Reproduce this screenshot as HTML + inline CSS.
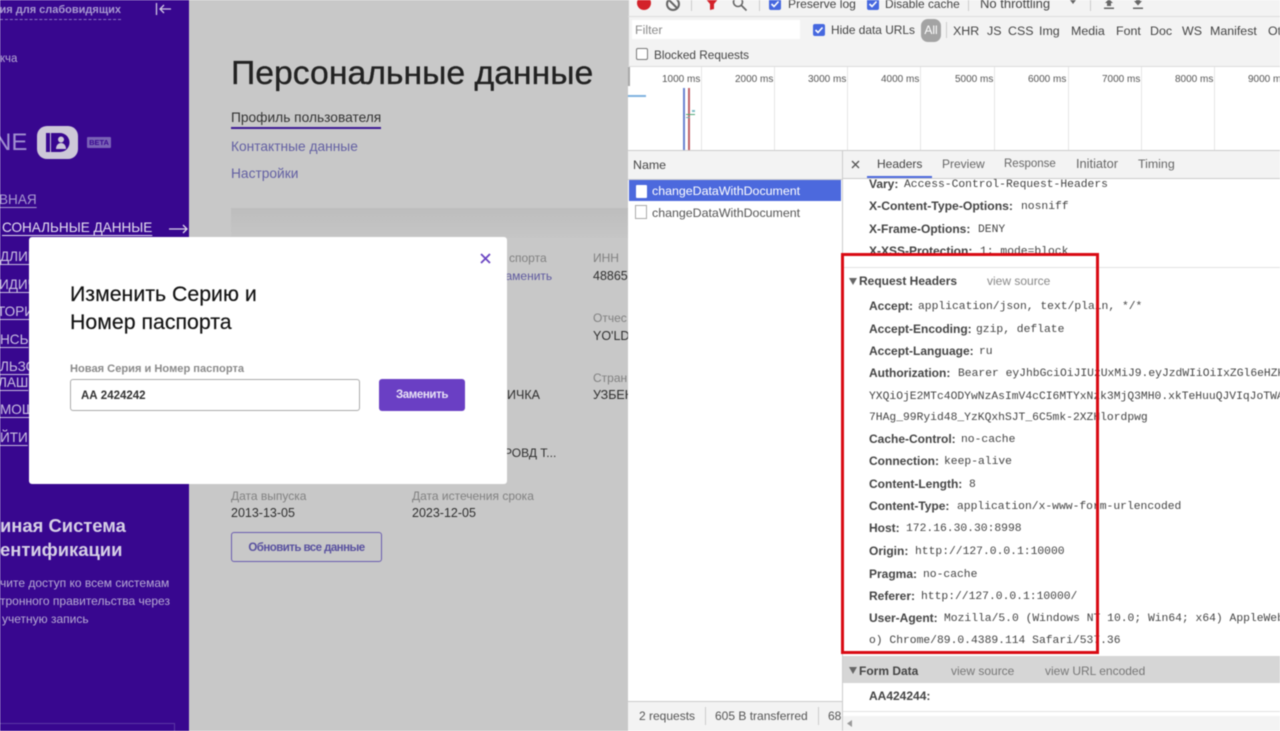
<!DOCTYPE html>
<html lang="ru"><head><meta charset="utf-8"><title>Персональные данные</title>
<style>
html,body{margin:0;padding:0;width:1280px;height:731px;overflow:hidden;background:#fff}
body{position:relative;font-family:"Liberation Sans","DejaVu Sans",sans-serif}
#w{position:absolute;left:0;top:0;width:1280px;height:731px;overflow:hidden;filter:blur(.4px)}
.b{position:absolute}
.t{position:absolute;white-space:nowrap;line-height:16px;height:16px}
.s{color:#c9bfe0;font-size:13.55px;text-decoration:underline;text-underline-offset:3px;text-decoration-thickness:1px}
.m{color:#6b6b6b;font-size:12px}
.v{color:#2f2f2f;font-size:12.5px}
.l{color:#5f5a9f;font-size:12px}
.n{color:#444;font-size:12px;font-weight:bold}
.c{color:#444;font-family:"Liberation Mono",monospace;font-size:11.33px;margin-top:1px}
.f{color:#444;font-size:12.4px}
.ms{color:#555;font-size:10px;margin-top:1px}
.tick{position:absolute;top:67px;width:1px;height:83px;background:#e6e6e6}
</style></head><body><div id="w">

<!-- sidebar -->
<div class="b" style="left:0;top:0;width:189px;height:731px;background:#38078f"></div>
<div class="t" style="left:0;top:2px;color:#a99bd0;font-size:11px;font-weight:bold;width:121px;overflow:hidden;text-align:right;direction:rtl"><bdi>ия для слабовидящих</bdi></div>
<div class="b" style="left:0;top:19px;width:121px;border-top:1px dashed #8c77c0"></div>
<svg class="b" style="left:154px;top:1px" width="20" height="16" viewBox="0 0 20 16" fill="none" stroke="#cfc7e2" stroke-width="1.3"><path d="M2.5 2v12M17 8H6M10 4 6 8l4 4"/></svg>
<div class="t" style="left:0;top:51px;color:#b5a9d3;font-size:11.5px">кча</div>
<div class="t" style="left:-6px;top:130px;height:26px;line-height:26px;color:#a08fcf;font-size:24px">NE</div>
<div class="b" style="left:37px;top:126px;width:41px;height:33px;background:#cdc8d8;border-radius:10px"></div>
<svg class="b" style="left:37px;top:126px" width="41" height="33" viewBox="0 0 41 33"><rect x="9" y="7" width="4" height="19" fill="#38078f"/><path d="M14 7h9a9.500 9.500 0 0 1 0 19h-9z" fill="#38078f"/><circle cx="24" cy="13.500" r="3" fill="#cdc8d8"/><path d="M19 23c0-4 2.500-6 5-6s5 2 5 6z" fill="#cdc8d8"/></svg>
<div class="b" style="left:87px;top:137px;width:24px;height:11px;background:#7a62b6;border-radius:1px;color:#38078f;font-size:7.500px;font-weight:bold;line-height:11px;text-align:center">BETA</div>
<div class="t s" style="left:-1px;top:192px;color:#a99bd0">ВНАЯ</div>
<div class="t s" style="left:2px;top:220px;color:#e4def0">СОНАЛЬНЫЕ ДАННЫЕ</div>
<svg class="b" style="left:168px;top:222px" width="21" height="14" viewBox="0 0 21 14" fill="none" stroke="#dcd6ea" stroke-width="1.300"><path d="M1 7h18M15 3l4 4-4 4"/></svg>
<div class="t s" style="left:0;top:249px">ДЛИН</div>
<div class="t s" style="left:-1px;top:277px">ИДИЧ</div>
<div class="t s" style="left:-3px;top:304px">ТОРИ</div>
<div class="t s" style="left:0;top:332px">НСЬ</div>
<div class="t s" style="left:0;top:359px">ЛЬЗО</div>
<div class="t s" style="left:-2px;top:375px">ЛАШ</div>
<div class="t s" style="left:0;top:402px">МОЩ</div>
<div class="t s" style="left:0;top:430px">ЙТИ</div>
<div class="t" style="left:0;top:515px;height:22px;line-height:22px;color:#d6d0e6;font-size:18.4px;font-weight:bold">иная Система</div>
<div class="t" style="left:0;top:539px;height:22px;line-height:22px;color:#d6d0e6;font-size:18.4px;font-weight:bold">ентификации</div>
<div class="t" style="left:0;top:575px;color:#b7abd4;font-size:12px">чите доступ ко всем системам</div>
<div class="t" style="left:0;top:593px;color:#b7abd4;font-size:12px">тронного правительства через</div>
<div class="t" style="left:2px;top:611px;color:#b7abd4;font-size:12px">учетную запись</div>
<div class="b" style="left:0;top:723px;width:175px;height:10px;border:1px solid #5a37a3;border-left:0;box-sizing:border-box"></div>

<!-- main -->
<div class="b" style="left:189px;top:0;width:439px;height:731px;background:#c8c8c8"></div>
<div class="t" style="left:231px;top:52px;height:42px;line-height:42px;color:#222;font-size:33.750px;-webkit-text-stroke:.3px #222">Персональные данные</div>
<div class="t" style="left:231px;top:110px;color:#333;font-size:13.750px">Профиль пользователя</div>
<div class="b" style="left:231px;top:127px;width:150px;height:2px;background:#3c1a94"></div>
<div class="t" style="left:231px;top:139px;color:#6360a3;font-size:13.750px">Контактные данные</div>
<div class="t" style="left:231px;top:166px;color:#6360a3;font-size:13.750px">Настройки</div>
<div class="b" style="left:231px;top:208px;width:397px;height:30px;background:linear-gradient(#bdbdbd,#c6c6c6)"></div>
<div class="t m" style="left:509px;top:250px;color:#818181">спорта</div>
<div class="t l" style="left:500px;top:268px">заменить</div>
<div class="t m" style="left:593px;top:250px;color:#818181">ИНН</div>
<div class="t v" style="left:593px;top:268px">48865</div>
<div class="t m" style="left:593px;top:310px;color:#818181">Отчес</div>
<div class="t v" style="left:593px;top:328px">YO'LD</div>
<div class="t m" style="left:593px;top:370px;color:#818181">Стран</div>
<div class="t v" style="left:593px;top:387px">УЗБЕК</div>
<div class="t v" style="left:507px;top:387px">ИЧКА</div>
<div class="t v" style="left:504px;top:445px;font-size:12px">РОВД Т...</div>
<div class="t m" style="left:231px;top:488px;color:#818181">Дата выпуска</div>
<div class="t v" style="left:231px;top:505px">2013-13-05</div>
<div class="t m" style="left:412px;top:488px;color:#818181">Дата истечения срока</div>
<div class="t v" style="left:412px;top:505px">2023-12-05</div>
<div class="b" style="left:231px;top:532px;width:151px;height:30px;box-sizing:border-box;border:1px solid #6a5cb0;border-radius:3px;color:#58509f;font-size:11.500px;letter-spacing:-.55px;font-weight:bold;line-height:30px;text-align:center">Обновить все данные</div>

<!-- modal -->
<div class="b" style="left:29px;top:237px;width:478px;height:247px;background:#fff;border-radius:3px"></div>
<svg class="b" style="left:479px;top:252px" width="13" height="13" viewBox="0 0 13 13" stroke="#6a45c2" stroke-width="1.800"><path d="M2 2l9 9M11 2l-9 9"/></svg>
<div class="t" style="left:70px;top:280px;height:28px;line-height:28px;color:#111;font-size:21.300px;-webkit-text-stroke:.15px #111">Изменить Серию и</div>
<div class="t" style="left:70px;top:308px;height:28px;line-height:28px;color:#111;font-size:21.300px;-webkit-text-stroke:.15px #111">Номер паспорта</div>
<div class="t" style="left:70px;top:361px;color:#8a8a8a;font-size:11.100px;font-weight:bold">Новая Серия и Номер паспорта</div>
<div class="b" style="left:70px;top:379px;width:290px;height:32px;box-sizing:border-box;border:1px solid #aaa;border-radius:3px;background:#fff"></div>
<div class="t" style="left:81px;top:388px;color:#333;font-size:11.500px;font-weight:bold">АА 2424242</div>
<div class="b" style="left:379px;top:379px;width:86px;height:32px;background:#6a3fc4;border-radius:3px;color:#e8e2f6;font-size:11.500px;letter-spacing:-.4px;font-weight:bold;line-height:32px;text-align:center">Заменить</div>

<!-- devtools -->
<div class="b" style="left:628px;top:151px;width:652px;height:580px;background:#fff"></div>
<div class="b" style="left:628px;top:0;width:652px;height:151px;background:#f3f3f3;border-left:1px solid #ccc;box-sizing:border-box"></div>
<div class="b" style="left:628px;top:16px;width:652px;height:1px;background:#dcdcdc"></div>
<div class="b" style="left:637px;top:-4px;width:14px;height:14px;border-radius:50%;background:#d3222a"></div>
<svg class="b" style="left:665px;top:-4px" width="16" height="16" viewBox="0 0 16 16" fill="none" stroke="#666" stroke-width="2"><circle cx="8" cy="8" r="6"/><path d="M4 4l8 8"/></svg>
<div class="b" style="left:691px;top:0;width:1px;height:11px;background:#ccc"></div>
<svg class="b" style="left:704px;top:-3px" width="16" height="14" viewBox="0 0 16 14"><path d="M1 1h14L10 7v5l-4 1V7z" fill="#d3222a"/></svg>
<svg class="b" style="left:732px;top:-4px" width="16" height="16" viewBox="0 0 16 16" fill="none" stroke="#666" stroke-width="1.600"><circle cx="6" cy="6" r="4.500"/><path d="M9.500 9.500l5 5"/></svg>
<div class="b" style="left:759px;top:0;width:1px;height:11px;background:#ccc"></div>
<div class="b" style="left:769px;top:-2px;width:12px;height:12px;background:#4668df;border-radius:2px"></div>
<svg class="b" style="left:769px;top:-2px" width="12" height="12" viewBox="0 0 12 12" fill="none" stroke="#fff" stroke-width="1.600"><path d="M2.500 6l2.500 2.500 4.500-5"/></svg>
<div class="t f" style="left:788px;top:-4px;font-size:12.100px">Preserve log</div>
<div class="b" style="left:867px;top:-2px;width:12px;height:12px;background:#4668df;border-radius:2px"></div>
<svg class="b" style="left:867px;top:-2px" width="12" height="12" viewBox="0 0 12 12" fill="none" stroke="#fff" stroke-width="1.600"><path d="M2.500 6l2.500 2.500 4.500-5"/></svg>
<div class="t f" style="left:885px;top:-4px;font-size:11.900px">Disable cache</div>
<div class="b" style="left:968px;top:0;width:1px;height:11px;background:#ccc"></div>
<div class="t f" style="left:980px;top:-4px;font-size:13px">No throttling</div>
<svg class="b" style="left:1070px;top:0" width="6" height="4" viewBox="0 0 6 4"><path d="M0 0h6L3 4z" fill="#666"/></svg>
<div class="b" style="left:1090px;top:0;width:1px;height:11px;background:#ccc"></div>
<svg class="b" style="left:1102px;top:-2px" width="14" height="12" viewBox="0 0 14 12" fill="#666"><path d="M7 1l4 4H9v3H5V5H3zM2 9.500h10V11H2z"/></svg>
<svg class="b" style="left:1131px;top:-2px" width="14" height="12" viewBox="0 0 14 12" fill="#666"><path d="M5 0h4v3h2L7 7.500 3 3h2zM2 9.500h10V11H2z"/></svg>

<div class="b" style="left:632px;top:20px;width:168px;height:19px;background:#fff"></div>
<div class="t" style="left:635px;top:22px;color:#8a8a8a;font-size:12.400px">Filter</div>
<div class="b" style="left:813px;top:24px;width:12px;height:12px;background:#4668df;border-radius:2px"></div>
<svg class="b" style="left:813px;top:24px" width="12" height="12" viewBox="0 0 12 12" fill="none" stroke="#fff" stroke-width="1.600"><path d="M2.500 6l2.500 2.500 4.500-5"/></svg>
<div class="t f" style="left:831px;top:22px;font-size:11.900px">Hide data URLs</div>
<div class="b" style="left:921px;top:19px;width:20px;height:23px;background:#a3a3a3;border-radius:7px;color:#fff;font-size:12px;line-height:23px;text-align:center">All</div>
<div class="b" style="left:946px;top:22px;width:1px;height:16px;background:#ccc"></div>
<div class="t f" style="left:953px;top:23px">XHR</div>
<div class="t f" style="left:987px;top:23px">JS</div>
<div class="t f" style="left:1008px;top:23px">CSS</div>
<div class="t f" style="left:1039px;top:23px">Img</div>
<div class="t f" style="left:1071px;top:23px">Media</div>
<div class="t f" style="left:1116px;top:23px">Font</div>
<div class="t f" style="left:1150px;top:23px">Doc</div>
<div class="t f" style="left:1182px;top:23px">WS</div>
<div class="t f" style="left:1210px;top:23px">Manifest</div>
<div class="t f" style="left:1268px;top:23px">Ot</div>
<div class="b" style="left:636px;top:48px;width:12px;height:12px;box-sizing:border-box;border:1px solid #777;border-radius:2px;background:#fff"></div>
<div class="t f" style="left:654px;top:47px;font-size:11.800px">Blocked Requests</div>

<div class="b" style="left:628px;top:66px;width:652px;height:85px;background:#fff;border-top:1px solid #dcdcdc;border-bottom:1px solid #ccc;box-sizing:border-box"></div>
<div class="b" style="left:628px;top:67px;width:2px;height:19px;background:#a8a8a8"></div>
<div class="tick" style="left:701px"></div><div class="tick" style="left:774px"></div><div class="tick" style="left:847px"></div><div class="tick" style="left:920px"></div><div class="tick" style="left:994px"></div><div class="tick" style="left:1068px"></div><div class="tick" style="left:1141px"></div><div class="tick" style="left:1214px"></div>
<div class="t ms" style="left:662px;top:71px">1000 ms</div>
<div class="t ms" style="left:735px;top:71px">2000 ms</div>
<div class="t ms" style="left:808px;top:71px">3000 ms</div>
<div class="t ms" style="left:881px;top:71px">4000 ms</div>
<div class="t ms" style="left:955px;top:71px">5000 ms</div>
<div class="t ms" style="left:1028px;top:71px">6000 ms</div>
<div class="t ms" style="left:1102px;top:71px">7000 ms</div>
<div class="t ms" style="left:1175px;top:71px">8000 ms</div>
<div class="t ms" style="left:1248px;top:71px">9000 ms</div>
<div class="b" style="left:628px;top:95px;width:18px;height:2px;background:#7fb2e0"></div>
<div class="b" style="left:683px;top:88px;width:2px;height:62px;background:#6a82d0"></div>
<div class="b" style="left:688px;top:88px;width:2px;height:62px;background:#c0616a"></div>
<div class="b" style="left:686px;top:114px;width:9px;height:1px;background:#50a878"></div>
<div class="b" style="left:692px;top:110px;width:3px;height:2px;background:#80c0c8"></div>
<div class="b" style="left:686px;top:117px;width:4px;height:1px;background:#7aa"></div>

<!-- name list -->
<div class="b" style="left:628px;top:151px;width:214px;height:29px;background:#f3f3f3;border-bottom:1px solid #ccc;box-sizing:border-box"></div>
<div class="t" style="left:633px;top:157px;color:#444;font-size:12.400px">Name</div>
<div class="b" style="left:629px;top:180px;width:212px;height:21px;background:#4c69dd"></div>
<div class="b" style="left:636px;top:185px;width:11px;height:13px;background:#fff;border-radius:1px"></div>
<div class="t" style="left:652px;top:183px;color:#fff;font-size:12.400px">changeDataWithDocument</div>
<div class="b" style="left:635px;top:205px;width:12px;height:14px;box-sizing:border-box;border:1px solid #aaa;background:#fff"></div>
<div class="t" style="left:652px;top:205px;color:#555;font-size:12.400px">changeDataWithDocument</div>
<div class="b" style="left:628px;top:701px;width:214px;height:30px;background:#f3f3f3;border-top:1px solid #ccc;box-sizing:border-box"></div>
<div class="t f" style="left:639px;top:708px;font-size:12px;color:#555">2 requests</div>
<div class="b" style="left:705px;top:707px;width:1px;height:18px;background:#ccc"></div>
<div class="t f" style="left:715px;top:708px;font-size:12px;color:#555">605 B transferred</div>
<div class="b" style="left:818px;top:707px;width:1px;height:18px;background:#ccc"></div>
<div class="t f" style="left:828px;top:708px;font-size:12px;color:#555;width:14px;overflow:hidden">68</div>
<div class="b" style="left:842px;top:151px;width:1px;height:580px;background:#ccc"></div>

<!-- detail tabs -->
<div class="b" style="left:843px;top:151px;width:437px;height:28px;background:#f3f3f3;border-bottom:1px solid #ccc;box-sizing:border-box"></div>
<svg class="b" style="left:851px;top:160px" width="9" height="9" viewBox="0 0 9 9" stroke="#555" stroke-width="1.300"><path d="M1 1l7 7M8 1l-7 7"/></svg>
<div class="t f" style="left:877px;top:156px;font-size:12px">Headers</div>
<div class="t f" style="left:942px;top:156px;color:#666;font-size:12px">Preview</div>
<div class="t f" style="left:1004px;top:156px;color:#666;font-size:11.500px">Response</div>
<div class="t f" style="left:1076px;top:156px;color:#666;font-size:12.800px">Initiator</div>
<div class="t f" style="left:1138px;top:156px;color:#666">Timing</div>
<div class="b" style="left:867px;top:176px;width:65px;height:2px;background:#4c69dd"></div>

<!-- headers -->
<div class="t n" style="left:869px;top:176px">Vary:</div><div class="t c" style="left:904px;top:176px">Access-Control-Request-Headers</div>
<div class="t n" style="left:869px;top:198px;font-size:12.200px">X-Content-Type-Options:</div><div class="t c" style="left:1021px;top:198px">nosniff</div>
<div class="t n" style="left:869px;top:221px">X-Frame-Options:</div><div class="t c" style="left:978px;top:221px">DENY</div>
<div class="t n" style="left:869px;top:243px">X-XSS-Protection:</div><div class="t c" style="left:980px;top:243px">1; mode=block</div>
<div class="b" style="left:843px;top:267px;width:437px;height:1px;background:#e2e2e2"></div>
<svg class="b" style="left:849px;top:278px" width="8" height="7" viewBox="0 0 8 7"><path d="M0 0h8L4 7z" fill="#666"/></svg>
<div class="t n" style="left:859px;top:273px">Request Headers</div>
<div class="t" style="left:987px;top:273px;color:#888;font-size:12px">view source</div>
<div class="t n" style="left:869px;top:298px">Accept:</div><div class="t c" style="left:918px;top:298px">application/json, text/plain, */*</div>
<div class="t n" style="left:869px;top:321px">Accept-Encoding:</div><div class="t c" style="left:976px;top:321px">gzip, deflate</div>
<div class="t n" style="left:869px;top:343px">Accept-Language:</div><div class="t c" style="left:979px;top:343px">ru</div>
<div class="t n" style="left:869px;top:365px">Authorization:</div><div class="t c" style="left:958px;top:365px">Bearer eyJhbGciOiJIUzUxMiJ9.eyJzdWIiOiIxZGl6eHZK</div>
<div class="t c" style="left:869px;top:388px">YXQiOjE2MTc4ODYwNzAsImV4cCI6MTYxNzk3MjQ3MH0.xkTeHuuQJVIqJoTWA</div>
<div class="t c" style="left:869px;top:409px">7HAg_99Ryid48_YzKQxhSJT_6C5mk-2XZHlordpwg</div>
<div class="t n" style="left:869px;top:431px">Cache-Control:</div><div class="t c" style="left:961px;top:431px">no-cache</div>
<div class="t n" style="left:869px;top:453px">Connection:</div><div class="t c" style="left:944px;top:453px">keep-alive</div>
<div class="t n" style="left:869px;top:476px">Content-Length:</div><div class="t c" style="left:969px;top:476px">8</div>
<div class="t n" style="left:869px;top:498px">Content-Type:</div><div class="t c" style="left:957px;top:498px">application/x-www-form-urlencoded</div>
<div class="t n" style="left:869px;top:520px">Host:</div><div class="t c" style="left:906px;top:520px">172.16.30.30:8998</div>
<div class="t n" style="left:869px;top:543px">Origin:</div><div class="t c" style="left:915px;top:543px">http://127.0.0.1:10000</div>
<div class="t n" style="left:869px;top:566px">Pragma:</div><div class="t c" style="left:923px;top:566px">no-cache</div>
<div class="t n" style="left:869px;top:588px">Referer:</div><div class="t c" style="left:921px;top:588px">http://127.0.0.1:10000/</div>
<div class="t n" style="left:869px;top:610px">User-Agent:</div><div class="t c" style="left:944px;top:610px">Mozilla/5.0 (Windows NT 10.0; Win64; x64) AppleWebKit</div>
<div class="t c" style="left:869px;top:632px">o) Chrome/89.0.4389.114 Safari/537.36</div>

<!-- form data -->
<div class="b" style="left:843px;top:656px;width:437px;height:27px;background:#d6d6d6"></div>
<svg class="b" style="left:849px;top:667px" width="8" height="7" viewBox="0 0 8 7"><path d="M0 0h8L4 7z" fill="#666"/></svg>
<div class="t n" style="left:859px;top:663px">Form Data</div>
<div class="t" style="left:951px;top:663px;color:#777;font-size:12px">view source</div>
<div class="t" style="left:1045px;top:663px;color:#777;font-size:12px">view URL encoded</div>
<div class="t n" style="left:869px;top:688px">AA424244:</div>
<div class="b" style="left:843px;top:711px;width:437px;height:1px;background:#e2e2e2"></div>
<div class="b" style="left:843px;top:716px;width:437px;height:15px;background:#f3f3f3"></div>
<svg class="b" style="left:847px;top:720px" width="5" height="7" viewBox="0 0 5 7"><path d="M5 0v7L0 3.500z" fill="#999"/></svg>

<!-- red frame -->
<div class="b" style="left:841px;top:253px;width:258px;height:401px;box-sizing:border-box;border:3px solid #d90b14"></div>
</div></body></html>
